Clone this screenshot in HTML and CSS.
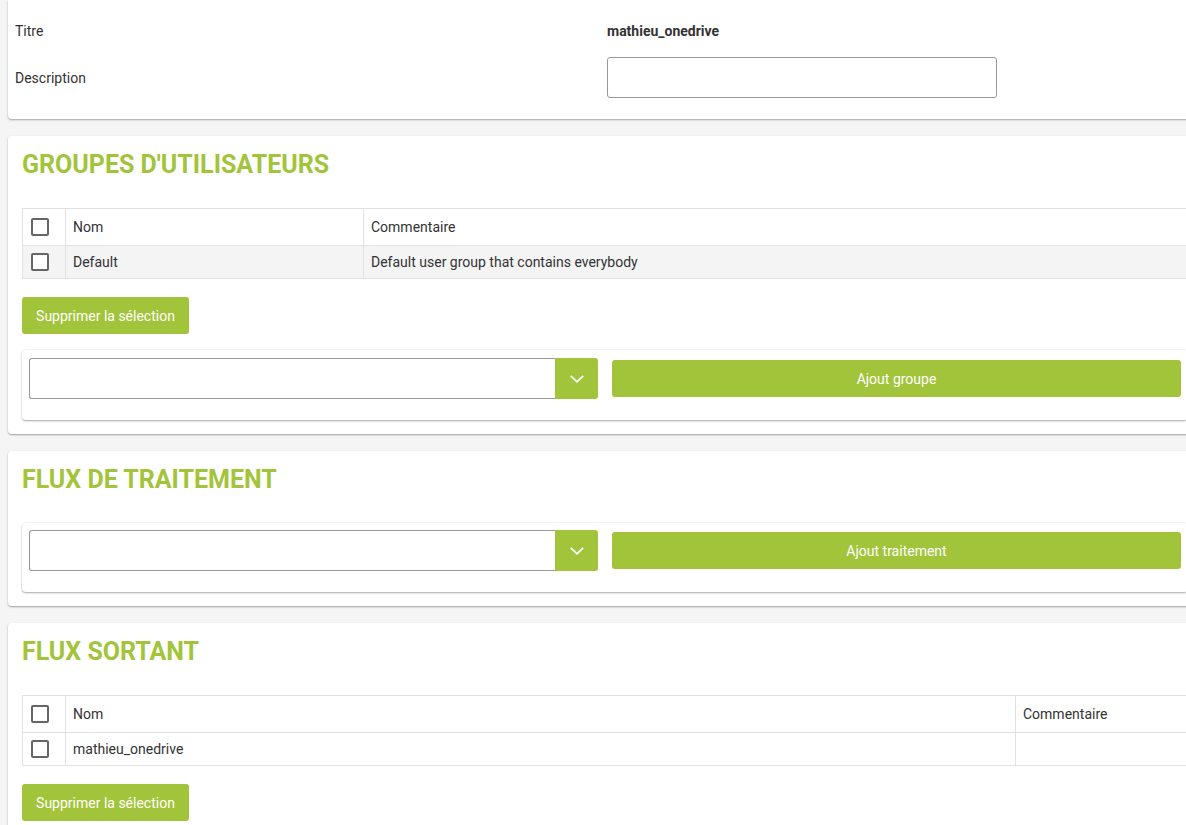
FILE: index.html
```html
<!DOCTYPE html>
<html lang="fr">
<head>
<meta charset="utf-8">
<title>mathieu_onedrive</title>
<link rel="stylesheet" href="styles.css">
</head>
<body>
<div class="page">
  <section class="card card-info">
    <div class="info-grid">
      <div class="info-label">Titre</div>
      <div class="info-value">mathieu_onedrive</div>
      <div class="info-label">Description</div>
      <div class="info-value"><input class="text-input" type="text"></div>
    </div>
  </section>

  <section class="card">
    <h2 class="card-title">GROUPES D'UTILISATEURS</h2>
    <table class="data-table table-groups">
      <colgroup><col class="col-check"><col class="col-name-a"><col></colgroup>
      <thead>
        <tr><th><span class="checkbox"></span></th><th>Nom</th><th>Commentaire</th></tr>
      </thead>
      <tbody>
        <tr class="striped"><td><span class="checkbox"></span></td><td>Default</td><td>Default user group that contains everybody</td></tr>
      </tbody>
    </table>
    <button class="btn btn-small">Supprimer la sélection</button>
    <div class="inner-card">
      <div class="add-row">
        <div class="select">
          <div class="select-box"></div>
          <div class="select-arrow">
            <svg width="16" height="16" viewBox="0 0 16 16"><path d="M1.8 4.8 L8 10.8 L14.2 4.8" fill="none" stroke="#fff" stroke-width="1.8"/></svg>
          </div>
        </div>
        <button class="btn btn-wide">Ajout groupe</button>
      </div>
    </div>
  </section>

  <section class="card">
    <h2 class="card-title">FLUX DE TRAITEMENT</h2>
    <div class="inner-card">
      <div class="add-row">
        <div class="select">
          <div class="select-box"></div>
          <div class="select-arrow">
            <svg width="16" height="16" viewBox="0 0 16 16"><path d="M1.8 4.8 L8 10.8 L14.2 4.8" fill="none" stroke="#fff" stroke-width="1.8"/></svg>
          </div>
        </div>
        <button class="btn btn-wide">Ajout traitement</button>
      </div>
    </div>
  </section>

  <section class="card">
    <h2 class="card-title">FLUX SORTANT</h2>
    <table class="data-table table-out">
      <colgroup><col class="col-check"><col class="col-name-b"><col></colgroup>
      <thead>
        <tr><th><span class="checkbox"></span></th><th>Nom</th><th>Commentaire</th></tr>
      </thead>
      <tbody>
        <tr><td><span class="checkbox"></span></td><td>mathieu_onedrive</td><td></td></tr>
      </tbody>
    </table>
    <button class="btn btn-small">Supprimer la sélection</button>
  </section>
</div>
</body>
</html>
```

FILE: styles.css
```css
html, body {
  margin: 0;
  padding: 0;
  background: #f5f5f5;
  overflow: hidden;
}
body {
  font-family: Roboto, "Liberation Sans", Arial, sans-serif;
  font-size: 14px;
  color: #333;
}
.page {
  width: 1194px;
  padding: 0 8px;
  display: flex;
  flex-direction: column;
  gap: 17px;
}
.card {
  background: #fff;
  box-shadow: 0 1px 2px rgba(0,0,0,0.35);
  padding: 14px 14px 14px 14px;
  border-radius: 4px;
}
.card-info {
  padding: 21px 7px 21px 7px;
  border-radius: 0 0 4px 4px;
}
.info-grid {
  display: grid;
  grid-template-columns: 592px 1fr;
  row-gap: 16px;
  align-items: center;
}
.info-label {
  line-height: 20px;
}
.info-value {
  font-weight: 700;
  line-height: 20px;
}
.text-input {
  display: block;
  width: 390px;
  height: 41px;
  box-sizing: border-box;
  border: 1px solid #999;
  border-radius: 3px;
  margin: 0;
  padding: 0 10px;
  font: inherit;
}
.card-title {
  margin: 0 0 28px 0;
  font-size: 25px;
  line-height: 30px;
  font-weight: 700;
  color: #a2c43a;
}
.data-table {
  width: 100%;
  border-collapse: collapse;
  table-layout: fixed;
  margin-bottom: 18px;
}
.col-check { width: 43px; }
.col-name-a { width: 298px; }
.col-name-b { width: 950px; }
.data-table th,
.data-table td {
  border: 1px solid #e2e2e2;
  text-align: left;
  font-weight: 400;
  padding: 0 7px;
  vertical-align: middle;
}
.data-table th { height: 36px; }
.data-table td { height: 32px; }
.striped td { background: #f4f4f4; }
.checkbox {
  display: block;
  width: 14px;
  height: 14px;
  border: 2px solid #666;
  border-radius: 2px;
  background: #fff;
  margin-left: 1px;
}
.btn {
  font-family: Roboto, "Liberation Sans", Arial, sans-serif;
  font-size: 14px;
  color: #fff;
  background: #a2c43a;
  border: none;
  border-radius: 3px;
  height: 37px;
  cursor: pointer;
}
.btn-small {
  display: block;
  padding: 0 14px;
  width: 167px;
}
.inner-card {
  margin-top: 16px;
  background: #fff;
  border-radius: 4px;
  box-shadow: 0 1px 2px rgba(0,0,0,0.35), 0 -1px 1px rgba(0,0,0,0.03);
  padding: 8px 7px 21px 7px;
}
.card > .inner-card:nth-child(2) {
  margin-top: 0;
  padding-top: 7px;
}
.add-row {
  display: grid;
  grid-template-columns: 1fr 1fr;
  gap: 14px;
  align-items: center;
}
.select {
  display: flex;
  height: 41px;
}
.select-box {
  flex: 1;
  border: 1px solid #999;
  border-right: none;
  border-radius: 3px 0 0 3px;
}
.select-arrow {
  width: 43px;
  background: #a2c43a;
  border-radius: 0 3px 3px 0;
  display: flex;
  align-items: center;
  justify-content: center;
}
.btn-wide {
  width: 100%;
}
```
